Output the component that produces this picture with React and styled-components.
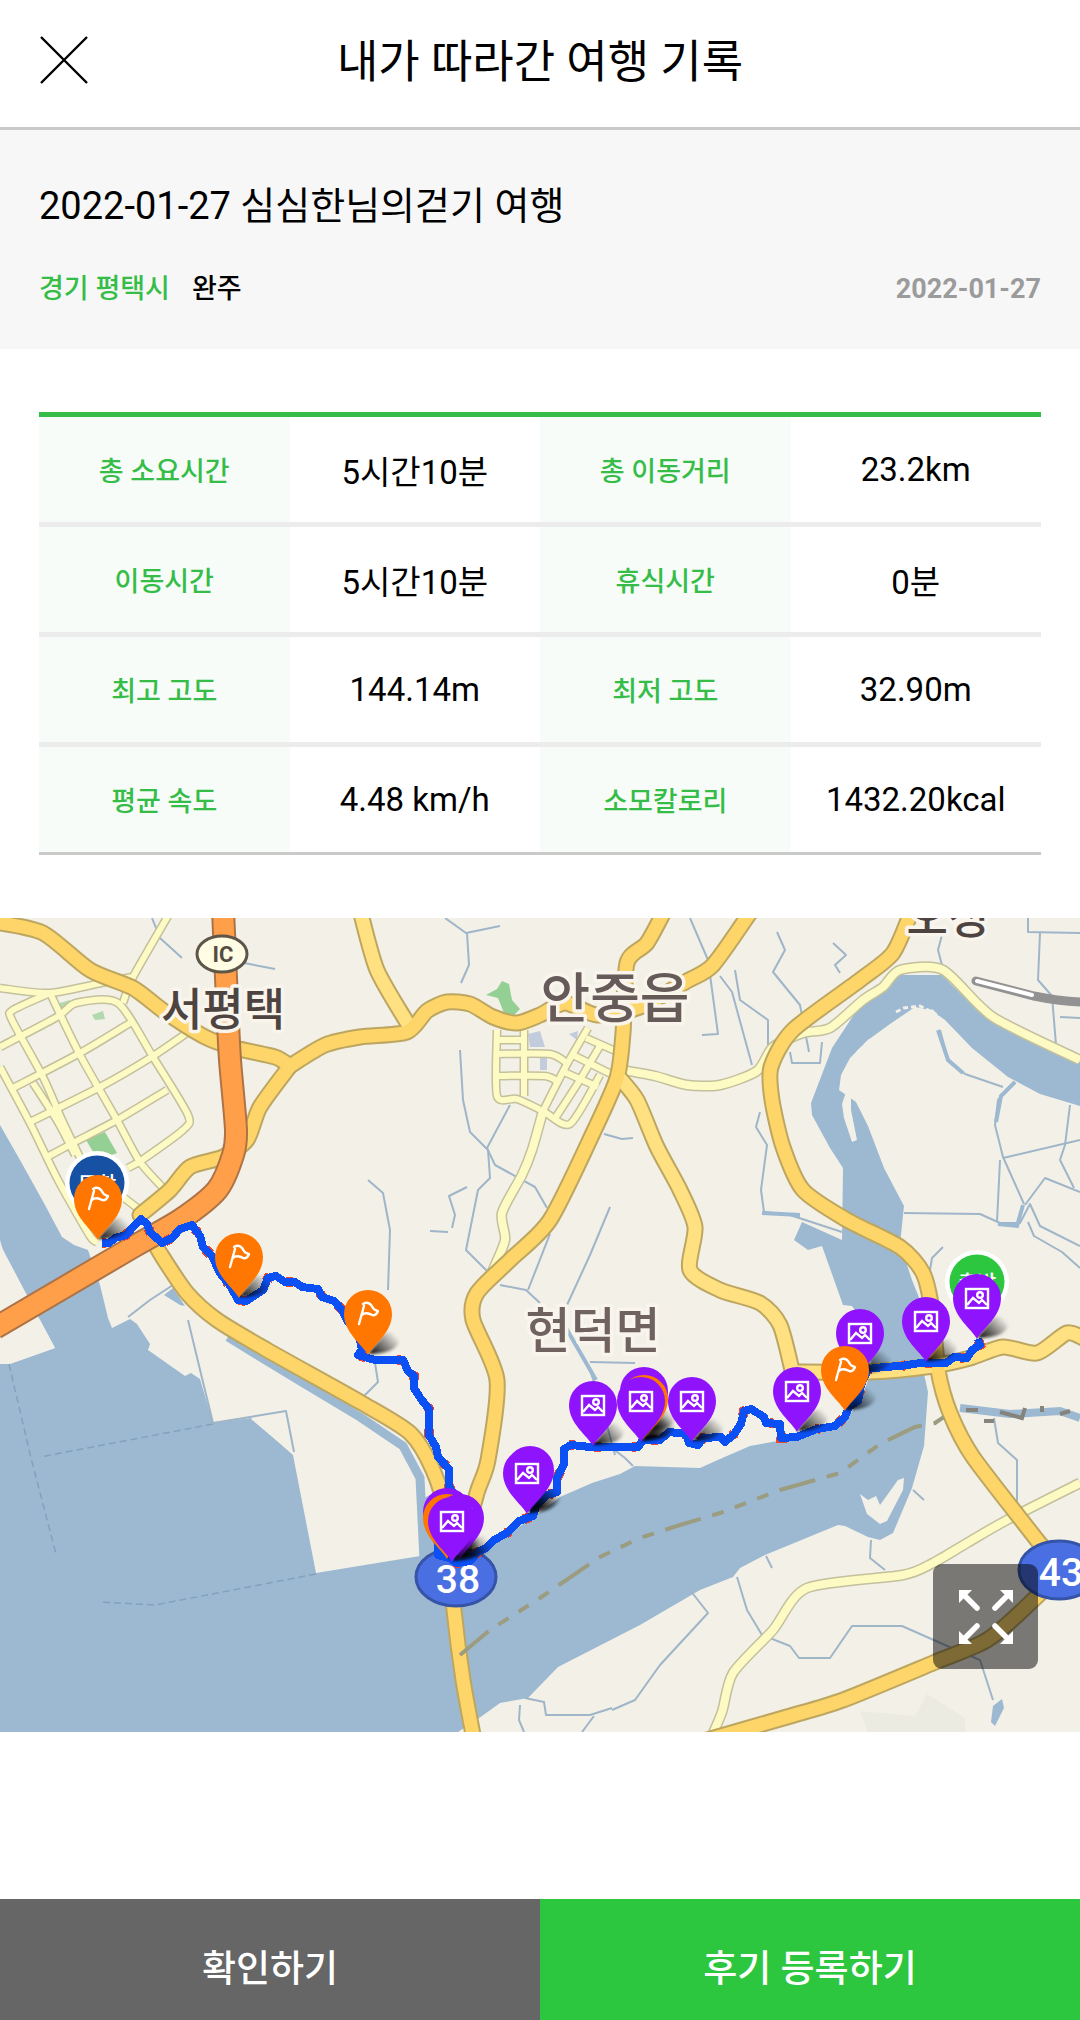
import React from "react";
import styled, { createGlobalStyle } from "styled-components";

const GlobalStyle = createGlobalStyle`
  * {
    box-sizing: border-box;
  }

  body {
    margin: 0;
    background: #fff;
    color: #000;
    font-family: Roboto, "Noto Sans CJK KR", sans-serif;
  }
`;

const Page = styled.div`
  display: flex;
  flex-direction: column;
  min-height: 100vh;
`;

const Header = styled.header`
  display: grid;
  grid-template-columns: 48px 1fr 48px;
  align-items: center;
  height: 130px;
  padding: 0 40px 8px;
  border-bottom: 3px solid #cacaca;
`;

const CloseButton = styled.button`
  display: flex;
  padding: 0;
  border: 0;
  background: none;
  cursor: pointer;
`;

const Title = styled.h1`
  margin: 0;
  padding-top: 6px;
  font-size: 45px;
  font-weight: 400;
  line-height: 56px;
  text-align: center;
`;

const Summary = styled.section`
  padding: 48px 39px 40px;
  background: #f7f7f7;
`;

const TripName = styled.h2`
  margin: 0 0 35px;
  font-size: 38px;
  font-weight: 400;
  line-height: 56px;
`;

const Meta = styled.div`
  display: flex;
  align-items: center;
  gap: 22px;
  font-size: 27px;
  font-weight: 500;
  line-height: 40px;
`;

const Region = styled.span`
  color: #35bd48;
`;

const TripDate = styled.time`
  margin-left: auto;
  color: #9b9b9b;
  font-weight: 700;
`;

const Records = styled.section`
  padding: 63px 39px;
`;

const RecordTable = styled.table`
  width: 100%;
  border-spacing: 0;
  table-layout: fixed;
  border-top: 5px solid #35bd48;
  border-bottom: 3px solid #cacaca;
  text-align: center;
`;

const Row = styled.tr`
  &:not(:last-child) > * {
    border-bottom: 5px solid #ececec;
    height: 110px;
  }
`;

const Label = styled.th`
  height: 105px;
  padding: 0;
  background: #f7fcf8;
  color: #35bd48;
  font-size: 27px;
  font-weight: 500;
`;

const Value = styled.td`
  height: 105px;
  padding: 0;
  font-size: 33px;
`;

const MapBox = styled.section`
  position: relative;
`;

const MapSvg = styled.svg`
  display: block;
  width: 100%;
  height: auto;
  font-family: Roboto, "Noto Sans CJK KR", sans-serif;
`;

const ExpandButton = styled.button`
  position: absolute;
  right: 42px;
  bottom: 63px;
  display: flex;
  align-items: center;
  justify-content: center;
  width: 105px;
  height: 105px;
  padding: 0;
  border: 0;
  border-radius: 9px;
  background: rgba(0, 0, 0, 0.5);
  cursor: pointer;
`;

const Footer = styled.footer`
  display: flex;
  margin-top: auto;
`;

const FooterButton = styled.button`
  flex: 1;
  height: 121px;
  padding: 12px 0 0;
  border: 0;
  background: ${({ $primary }) => ($primary ? "#2dc63f" : "#666")};
  color: #fff;
  font-family: inherit;
  font-size: 37px;
  font-weight: 500;
  cursor: pointer;
`;

const records = [
  ["총 소요시간", "5시간10분", "총 이동거리", "23.2km"],
  ["이동시간", "5시간10분", "휴식시간", "0분"],
  ["최고 고도", "144.14m", "최저 고도", "32.90m"],
  ["평균 속도", "4.48 km/h", "소모칼로리", "1432.20kcal"]
];

// the map is drawn in a 1080 x 814 window that starts at y = 918
const water = [
  "M0 1125L20 1160L45 1205L62 1237L74 1245L88 1250L100 1285L108 1318L112 1328L130 1319L137 1324L150 1344L148 1350L185 1376L191 1373L200 1379L213 1423L251 1418L293 1455L316 1573L420 1556V1500L440 1490L470 1560L500 1538L530 1520L560 1497L592 1483L620 1474L635 1466L700 1468L720 1459L750 1446L800 1437L846 1421L862 1396L872 1370L868 1330L852 1306L843 1305L822 1246L808 1250L794 1240L802 1222L842 1240L843 1168L830 1148L812 1115L811 1103L832 1048L855 1013L880 990L900 975H942L962 995L1000 1020L1080 1062V1106L1040 1094L1008 1077L972 1048L945 1020L930 1010L915 1007L890 1024L868 1040L850 1058L841 1075L839 1090L856 1102L868 1126L884 1168L904 1206L900 1244L912 1280L920 1300L922 1340L924 1374L928 1392L924 1446L912 1488L893 1533L880 1540L868 1537L845 1526L838 1525L765 1555L740 1568L733 1577L700 1590L640 1625L558 1667L528 1698L500 1703L482 1716L458 1732H0V1364L10 1364L55 1348L40 1320L0 1244Z"
];

const land = [
  "M0 1240L15 1293L40 1320L55 1348L9 1364L0 1330Z",
  "M251 1419L287 1411L294 1455Z",
  "M846 1092L851 1098L851 1110L857 1140L852 1142L844 1118L842 1104Z",
  "M860 1494L868 1500L876 1496L880 1505L898 1480L904 1478L903 1490L887 1521L880 1524L867 1514Z"
];

const streams = [
  [[152, 918], [160, 938], [182, 958]],
  [[244, 963], [275, 969]],
  [[445, 918], [466, 933], [500, 926]],
  [[467, 933], [469, 965], [461, 983]],
  [[460, 1050], [463, 1100], [470, 1132], [488, 1150], [490, 1178], [478, 1190], [466, 1250], [488, 1272]],
  [[510, 1105], [487, 1148], [495, 1165], [535, 1187], [547, 1208]],
  [[368, 1180], [383, 1193], [390, 1230], [388, 1290]],
  [[467, 1187], [449, 1196], [455, 1215], [452, 1228]],
  [[430, 1231], [448, 1232]],
  [[604, 1134], [622, 1139], [633, 1138]],
  [[610, 1207], [590, 1255], [567, 1305]],
  [[550, 1234], [528, 1290]],
  [[500, 1285], [526, 1290], [540, 1303]],
  [[567, 1328], [590, 1370], [600, 1400], [615, 1455]],
  [[590, 1362], [635, 1363]],
  [[612, 1448], [625, 1458], [633, 1466]],
  [[690, 918], [708, 960], [718, 1034], [702, 1035]],
  [[777, 932], [785, 950], [773, 972], [800, 1005], [809, 1052]],
  [[833, 943], [846, 955], [835, 965], [840, 973]],
  [[720, 976], [732, 992], [752, 1065]],
  [[735, 970], [740, 1000], [768, 1020], [768, 1045]],
  [[942, 935], [938, 950], [942, 965]],
  [[1028, 918], [1028, 932], [1080, 933]],
  [[1040, 933], [1038, 980], [1052, 996], [1056, 1045]],
  [[1060, 1017], [1080, 1018]],
  [[760, 1112], [756, 1127], [767, 1145], [761, 1190], [764, 1212], [790, 1215], [842, 1232]],
  [[790, 1052], [792, 1063], [820, 1063], [822, 1042]],
  [[940, 1030], [948, 1060], [965, 1074], [1003, 1087]],
  [[904, 1213], [980, 1214], [1000, 1223], [1020, 1223], [1030, 1204], [1040, 1226], [1080, 1246]],
  [[1015, 1082], [998, 1100], [995, 1125], [1003, 1157], [1024, 1204]],
  [[1028, 1222], [1034, 1236], [1062, 1252], [1080, 1268]],
  [[1003, 1158], [1080, 1140]],
  [[1000, 1160], [997, 1222]],
  [[1025, 1205], [1045, 1178], [1080, 1192]],
  [[1070, 1105], [1065, 1145], [1060, 1160], [1074, 1188]],
  [[943, 1247], [932, 1258], [930, 1270]],
  [[188, 1320], [202, 1378], [213, 1423], [286, 1411], [294, 1452]],
  [[128, 1317], [150, 1300], [173, 1285]],
  [[375, 1363], [378, 1382], [360, 1400]],
  [[690, 1590], [708, 1613], [660, 1665], [635, 1700], [612, 1710]],
  [[525, 1698], [544, 1702], [546, 1715], [590, 1715], [612, 1708]],
  [[520, 1705], [519, 1720], [524, 1732]],
  [[594, 1716], [582, 1732]],
  [[737, 1577], [747, 1610], [762, 1635], [790, 1646], [799, 1658], [830, 1658], [852, 1626], [902, 1626], [945, 1645], [980, 1660], [993, 1700]],
  [[871, 1540], [870, 1558], [885, 1570]],
  [[766, 1556], [772, 1568]],
  [[994, 1418], [998, 1443], [1017, 1460], [1017, 1508]],
  [[913, 1490], [924, 1500]]
];

const lanes = [
  [[0, 988], [50, 993], [110, 981], [133, 977]],
  [[168, 916], [133, 977], [123, 1003]],
  [[0, 1067], [30, 1123], [58, 1180], [90, 1236], [98, 1242]],
  [[50, 993], [13, 1010], [12, 1020], [43, 1077], [62, 1120], [85, 1168]],
  [[33, 1083], [58, 1122], [75, 1155]],
  [[50, 993], [80, 1055], [117, 1120], [140, 1162], [167, 1192]],
  [[0, 1047], [57, 1017], [76, 1003], [118, 1003], [153, 1057], [188, 1115], [183, 1130], [142, 1160], [128, 1168]],
  [[13, 1088], [80, 1053], [130, 1023]],
  [[30, 1122], [100, 1087], [150, 1058], [187, 1033]],
  [[47, 1157], [75, 1142], [117, 1120], [167, 1090]],
  [[85, 1168], [140, 1210]],
  [[497, 1030], [497, 1096], [517, 1099], [543, 1111], [570, 1124], [600, 1075]],
  [[524, 1030], [524, 1096]],
  [[497, 1040], [524, 1040]],
  [[497, 1054], [550, 1054], [568, 1064]],
  [[497, 1076], [545, 1076], [558, 1082]],
  [[588, 1028], [566, 1066], [543, 1111]],
  [[600, 1046], [578, 1083], [556, 1117]],
  [[586, 1038], [620, 1053]],
  [[573, 1055], [611, 1074]],
  [[564, 1072], [598, 1087]],
  [[543, 1111], [532, 1150], [522, 1175], [502, 1213], [505, 1240], [492, 1272]],
  [[622, 1070], [655, 1076], [687, 1085], [720, 1085], [757, 1071], [773, 1047], [803, 1033], [830, 1028], [863, 1000], [883, 987], [900, 970], [943, 970], [993, 1017], [1080, 1060]],
  [[1080, 1483], [1007, 1520], [967, 1543], [933, 1563], [903, 1575], [807, 1588], [773, 1630], [733, 1673], [722, 1712], [710, 1740]]
];

const roads = [
  { pts: [[360, 910], [377, 970], [408, 1024]], fill: "#ffe182" },
  { pts: [[618, 1076], [637, 1100], [657, 1147], [680, 1190], [695, 1227], [690, 1270], [720, 1290], [760, 1303], [780, 1325], [792, 1370]], fill: "#ffe182" },
  { pts: [[792, 1372], [870, 1372], [933, 1366], [970, 1358], [1003, 1347], [1037, 1353], [1067, 1333], [1085, 1339]], fill: "#ffe182" },
  { pts: [[290, 1066], [260, 1107], [247, 1140], [223, 1157], [190, 1167], [170, 1190], [140, 1215]] },
  { pts: [[155, 1243], [160, 1253], [187, 1293], [217, 1320], [267, 1350], [360, 1402], [410, 1433], [433, 1470], [446, 1515], [454, 1610], [463, 1680], [474, 1740]] },
  { pts: [[-5, 922], [43, 933], [90, 970], [133, 988], [165, 1012], [205, 1037], [235, 1048], [275, 1057], [290, 1066]] },
  { pts: [[290, 1066], [325, 1045], [360, 1037], [407, 1032], [427, 1011], [447, 1002], [470, 1004], [493, 1017], [517, 1023], [540, 1015], [565, 1003], [597, 1015], [640, 1007], [687, 981], [713, 965], [752, 910]] },
  { pts: [[665, 910], [647, 943], [627, 963], [623, 1033], [617, 1078], [593, 1133], [550, 1220], [510, 1260], [477, 1293], [473, 1320], [497, 1380], [488, 1460], [477, 1493], [462, 1550]] },
  { pts: [[912, 910], [893, 953], [860, 980], [793, 1030], [771, 1067], [772, 1100], [783, 1147], [803, 1190], [847, 1220], [900, 1247], [923, 1273], [932, 1310], [938, 1370], [950, 1413], [973, 1457], [1037, 1540], [1059, 1570], [1030, 1603], [987, 1640], [933, 1663], [843, 1700], [787, 1717], [700, 1742]] }
];

const highway = [[223, 910], [227, 1000], [230, 1060], [236, 1130], [233, 1155], [217, 1190], [180, 1220], [133, 1247], [-5, 1328]];

const route = "M102 1243L109 1243L115 1238L126 1235L134 1226L141 1219L147 1224L150 1232L162 1243L172 1238L180 1229L192 1225L200 1236L203 1247L212 1256L220 1273L231 1287L238 1300L246 1301L254 1296L263 1290L268 1278L276 1276L285 1282L295 1282L302 1287L318 1289L322 1297L334 1301L342 1310L348 1322L358 1330L362 1350L358 1355L375 1360L403 1360L408 1371L414 1376L414 1388L421 1399L429 1409L429 1435L436 1447L438 1457L449 1469L449 1487L454 1494L452 1530L438 1540L438 1555L449 1558L457 1563L470 1561L478 1552L486 1548L494 1540L507 1533L519 1521L533 1516L536 1506L547 1495L557 1492L557 1478L564 1464L564 1449L571 1445L590 1447L638 1447L643 1440L660 1440L669 1432L686 1434L689 1443L698 1445L703 1438L721 1437L725 1442L734 1434L741 1424L744 1411L751 1409L764 1417L766 1423L780 1424L781 1438L797 1437L817 1429L835 1426L845 1417L849 1407L858 1401L861 1385L868 1369L884 1367L901 1366L920 1363L946 1363L954 1357L967 1358L972 1350L980 1345L978 1339";

const pins = [
  { x: 98, y: 1199, type: "flag" },
  { x: 239, y: 1257, type: "flag" },
  { x: 368, y: 1314, type: "flag" },
  { x: 447, y: 1512, type: "photo" },
  { x: 447, y: 1518, type: "flag" },
  { x: 460, y: 1518, type: "photo" },
  { x: 452, y: 1521, type: "photo" },
  { x: 530, y: 1470, type: "photo" },
  { x: 527, y: 1473, type: "photo" },
  { x: 593, y: 1405, type: "photo" },
  { x: 644, y: 1391, type: "photo" },
  { x: 644, y: 1399, type: "flag" },
  { x: 641, y: 1401, type: "photo" },
  { x: 692, y: 1401, type: "photo" },
  { x: 797, y: 1391, type: "photo" },
  { x: 860, y: 1333, type: "photo" },
  { x: 845, y: 1370, type: "flag" },
  { x: 926, y: 1321, type: "photo" },
  { x: 977, y: 1298, type: "photo" }
];

const towns = [
  { name: "서평택", x: 223, y: 1026, size: 45, color: "#4d4442" },
  { name: "안중읍", x: 615, y: 1018, size: 54, color: "#665b59" },
  { name: "현덕면", x: 593, y: 1348, size: 49, color: "#70625f" },
  { name: "오성", x: 948, y: 934, size: 45, color: "#4d4442" }
];

// rounded curve through every point
const curve = pts => {
  let d = `M${pts[0]}`;
  for (let i = 0; i < pts.length - 1; i++) {
    const a = pts[i - 1] || pts[i];
    const b = pts[i];
    const c = pts[i + 1];
    const e = pts[i + 2] || c;
    d += `C${b[0] + (c[0] - a[0]) / 8} ${b[1] + (c[1] - a[1]) / 8} ${c[0] -
      (e[0] - b[0]) / 8} ${c[1] - (e[1] - b[1]) / 8} ${c[0]} ${c[1]}`;
  }
  return d;
};

const line = pts => `M${pts.join("L")}`;

const Pin = ({ x, y, type }) => (
  <g transform={`translate(${x} ${y})`}>
    <path
      d="M0 40L16 20C26 14 34 22 30 30C26 38 12 40 0 40Z"
      fill="url(#pinShadow)"
      filter="url(#soft)"
    />
    <path
      d="M0 41C-5 31 -24 19 -24 0A24 24 0 0 1 24 0C24 19 5 31 0 41Z"
      fill={type === "flag" ? "#ff7700" : "#9013fe"}
    />
    {type === "flag" ? (
      <path
        d="M-9 10L-4 -8M-5 -10C0 -13 3 -10 5 -6C6 -4 8 -4 10 -3C8 2 5 2 2 0C-1 -1 -4 -1 -6 1"
        fill="none"
        stroke="#fff"
        strokeWidth="2.4"
        strokeLinecap="round"
        strokeLinejoin="round"
      />
    ) : (
      <g fill="none" stroke="#fff" strokeWidth="2.4">
        <rect x="-11" y="-9" width="22" height="19" />
        <circle cx="3" cy="-3" r="2.8" />
        <path d="M-10 7L-4 0L2 5L5 2L10 7" />
      </g>
    )}
  </g>
);

const EndPoint = ({ x, y, color, children }) => (
  <g>
    <circle cx={x} cy={y} r="32" fill="#fff" />
    <circle cx={x} cy={y} r="27.5" fill={color} />
    <text x={x} y={y + 8} fill="#fff" fontSize="21" fontWeight="500" textAnchor="middle">
      {children}
    </text>
  </g>
);

const RouteSign = ({ x, y, children }) => (
  <g>
    <ellipse cx={x} cy={y} rx="40" ry="29" fill="#4a6fe3" stroke="#3554a8" strokeWidth="3" />
    <text x={x + 2} y={y + 16} fill="#fff" fontSize="39" fontWeight="500" textAnchor="middle">
      {children}
    </text>
  </g>
);

const RouteMap = () => (
  <MapSvg viewBox="0 918 1080 814" role="img" aria-label="여행 경로 지도">
    <defs>
      <linearGradient id="pinShadow" x1="0" y1="1" x2="1" y2="0.3">
        <stop offset="0" stopColor="#000" />
        <stop offset="0.4" stopColor="#000" stopOpacity="0.6" />
        <stop offset="1" stopColor="#000" stopOpacity="0" />
      </linearGradient>
      <filter id="soft" x="-20%" y="-20%" width="140%" height="140%">
        <feGaussianBlur stdDeviation="1.5" />
      </filter>
    </defs>

    <rect y="918" width="1080" height="814" fill="#f3f0e8" />
    <g fill="#9cb9d1">
      {water.map(d => (
        <path key={d} d={d} />
      ))}
      <path d="M164 1295L173 1288L185 1306L180 1305Z" />
      <path d="M993 1706L1002 1699L1004 1708L995 1726L991 1722Z" />
    </g>
    <g fill="#f3f0e8">
      {land.map(d => (
        <path key={d} d={d} />
      ))}
    </g>
    <g fill="none" stroke="#f3f0e8" strokeWidth="3">
      <path d="M896 1012L904 1008L920 1006L932 1012L937 1020L947 1026L963 1042" strokeDasharray="5 3" />
      <path d="M931 1010L946 1024L960 1038M870 1040L858 1052L862 1064" strokeDasharray="8 2" />
    </g>
    <path d="M228 1337L300 1381L360 1417L403 1446L420 1478L424 1560" fill="none" stroke="#9cb9d1" strokeWidth="9" />
    <g fill="none" stroke="#83a1ba" strokeWidth="1.5" strokeDasharray="7 4">
      <path d="M9 1364L31 1458L56 1554M213 1424L40 1457M316 1574L155 1605L100 1602" />
    </g>
    <g fill="none" stroke="#9fb5c8" strokeWidth="2" strokeLinejoin="round">
      {streams.map((pts, i) => (
        <path key={i} d={line(pts)} />
      ))}
    </g>
    <g fill="none" stroke="#9cb9d1" strokeWidth="4">
      <path d="M938 1030L948 1060L963 1073M1015 1082L1001 1096L996 1122M762 1213L800 1215M1023 1205L1017 1226L998 1224M566 1328L596 1380" />
      <path d="M960 1408L1010 1414L1060 1411L1080 1418" strokeWidth="8" />
    </g>
    <g fill="#94cf94">
      <path d="M486 995L497 989L502 981L509 984L512 1000L520 1009L514 1015L504 1013L498 998Z" />
      <path d="M86 1140L105 1132L117 1153L98 1160Z" />
      <path d="M57 1004L70 1000L67 1008L60 1009ZM92 1015L103 1011L105 1019L95 1020Z" opacity="0.7" />
    </g>
    <path d="M528 1034L540 1031L545 1047H530ZM569 1034L578 1031L577 1040ZM540 1058H547V1070H540Z" fill="#c3ccdd" />
    <path d="M860 1711L915 1716L927 1694L965 1718V1732H868Z" fill="#ecebe2" />

    <g fill="none" strokeLinejoin="round">
      {lanes.map((pts, i) => (
        <path key={i} d={curve(pts)} stroke="#c3c09d" strokeWidth={i < 21 ? 9 : 11} />
      ))}
      {lanes.map((pts, i) => (
        <path key={i} d={curve(pts)} stroke="#fdfbc3" strokeWidth={i < 21 ? 6 : 8} />
      ))}
      {roads.map(({ pts }, i) => (
        <path key={i} d={curve(pts)} stroke="#bda660" strokeWidth="17" strokeLinecap="round" />
      ))}
      {roads.map(({ pts, fill = "#fdd568" }, i) => (
        <path key={i} d={curve(pts)} stroke={fill} strokeWidth="13" strokeLinecap="round" />
      ))}
      <path d={curve(highway)} stroke="#ad7346" strokeWidth="24" />
      <path d={curve(highway)} stroke="#ff9f4a" strokeWidth="20" />
    </g>
    <g fill="none" stroke="#9b9c80" strokeWidth="4">
      <path
        d="M460 1655L490 1630L540 1598L600 1557L640 1538L680 1525L720 1513L780 1490L840 1473L880 1444L915 1427L935 1423L953 1411"
        strokeDasharray="37 12 12 12 12 12 12 12"
      />
      <path d="M966 1410H978M1000 1412L1022 1418L1025 1408M1042 1406V1412M1060 1414L1070 1411M984 1421H994" stroke="#85847c" />
    </g>
    <g fill="none" strokeLinecap="round">
      <path d="M976 981L1034 996Q1058 1001 1080 1002" stroke="#929292" strokeWidth="9" />
      <path d="M977 981L1032 995" stroke="#fff" strokeWidth="4" />
    </g>

    <ellipse cx="222" cy="954" rx="25" ry="18" fill="#fffde4" stroke="#5d5548" strokeWidth="3" />
    <text x="223" y="962" fill="#544b42" fontSize="22" fontWeight="700" textAnchor="middle">
      IC
    </text>
    {towns.map(({ name, x, y, size, color }) => (
      <text
        key={name}
        x={x}
        y={y}
        fill={color}
        stroke="#f9f5ec"
        strokeWidth="7"
        strokeLinejoin="round"
        paintOrder="stroke"
        fontSize={size}
        fontWeight="500"
        textAnchor="middle"
      >
        {name}
      </text>
    ))}
    <RouteSign x={456} y={1577}>
      38
    </RouteSign>
    <RouteSign x={1059} y={1570}>
      43
    </RouteSign>

    <g fill="none" shapeRendering="crispEdges">
      <path d={route} stroke="#f0452a" strokeWidth="10" strokeDasharray="4 19 7 31" />
      <path d={route} stroke="#0b50f4" strokeWidth="8" strokeLinejoin="round" />
    </g>
    <EndPoint x={97} y={1183} color="#1651a3">
      도착
    </EndPoint>
    <EndPoint x={977} y={1282} color="#2dc63f">
      출발
    </EndPoint>
    {pins.map((pin, i) => (
      <Pin key={i} {...pin} />
    ))}
  </MapSvg>
);

const ExpandIcon = () => (
  <svg width="54" height="54" viewBox="-27 -27 54 54" aria-hidden="true">
    {[0, 90, 180, 270].map(angle => (
      <g key={angle} transform={`rotate(${angle})`}>
        <path d="M-27 -27H-14L-27 -14Z" fill="#fff" />
        <path d="M-22 -22L-9 -9" stroke="#fff" strokeWidth="5.5" strokeLinecap="round" />
      </g>
    ))}
  </svg>
);

const App = () => (
  <Page>
    <GlobalStyle />
    <Header>
      <CloseButton type="button" aria-label="닫기">
        <svg width="48" height="48" viewBox="0 0 48 48" aria-hidden="true">
          <path d="M1 1L47 47M47 1L1 47" stroke="#000" strokeWidth="2.4" />
        </svg>
      </CloseButton>
      <Title>내가 따라간 여행 기록</Title>
    </Header>
    <Summary>
      <TripName>2022-01-27 심심한님의걷기 여행</TripName>
      <Meta>
        <Region>경기 평택시</Region>
        <span>완주</span>
        <TripDate dateTime="2022-01-27">2022-01-27</TripDate>
      </Meta>
    </Summary>
    <Records>
      <RecordTable>
        <tbody>
          {records.map(([label, value, nextLabel, nextValue]) => (
            <Row key={label}>
              <Label scope="row">{label}</Label>
              <Value>{value}</Value>
              <Label scope="row">{nextLabel}</Label>
              <Value>{nextValue}</Value>
            </Row>
          ))}
        </tbody>
      </RecordTable>
    </Records>
    <MapBox>
      <RouteMap />
      <ExpandButton type="button" aria-label="지도 크게 보기">
        <ExpandIcon />
      </ExpandButton>
    </MapBox>
    <Footer>
      <FooterButton type="button">확인하기</FooterButton>
      <FooterButton type="button" $primary>
        후기 등록하기
      </FooterButton>
    </Footer>
  </Page>
);

export default App;
